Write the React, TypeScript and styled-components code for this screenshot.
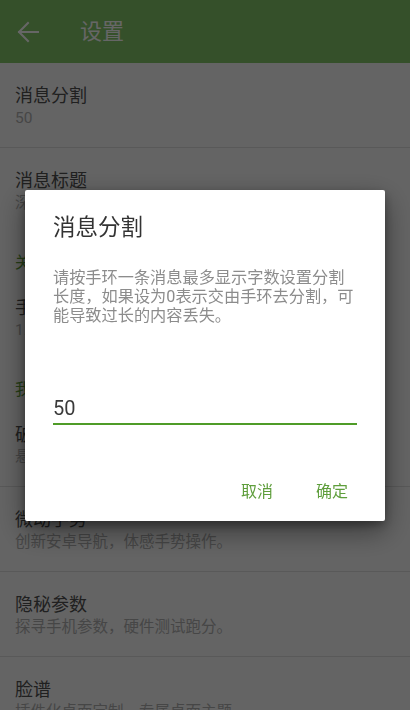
import React from "react";
import styled, { createGlobalStyle } from "styled-components";

const FONT = `Roboto, "Noto Sans CJK SC", "Noto Sans", sans-serif`;

const COLORS = {
  primary: "#84c869",
  accent: "#5f9e3c",
  line: "#4f9c28",
  title: "#505050",
  summary: "#b0b0b0",
  divider: "#dedede",
};

interface Pref {
  kind: "item" | "category";
  title: string;
  summary?: string;
  divider?: boolean;
}

const prefs: Pref[] = [
  { kind: "item", title: "消息分割", summary: "50", divider: true },
  { kind: "item", title: "消息标题", summary: "深度定制通知标题格式" },
  { kind: "category", title: "关于手环" },
  { kind: "item", title: "手环版本", summary: "1.0.3.21" },
  { kind: "category", title: "我的工具" },
  { kind: "item", title: "破解主题", summary: "悬浮窗口，随时切换主题。", divider: true },
  { kind: "item", title: "微动手势", summary: "创新安卓导航，体感手势操作。", divider: true },
  { kind: "item", title: "隐秘参数", summary: "探寻手机参数，硬件测试跑分。", divider: true },
  { kind: "item", title: "脸谱", summary: "插件化桌面定制，专属桌面主题。" },
];

const GlobalStyle = createGlobalStyle`
  html, body, #root {
    margin: 0;
    padding: 0;
    height: 100%;
  }
  body {
    font-family: ${FONT};
    background: #fafafa;
    overflow: hidden;
  }
  * {
    box-sizing: border-box;
  }
`;

const App: React.FC = () => {
  return (
    <>
      <GlobalStyle />
      <Page>
        <Toolbar>
          <BackButton>
            <svg width="24" height="22" viewBox="0 0 24 22" fill="none">
              <path
                d="M22 11H3M12 2L3 11l9 9"
                stroke="#fff"
                strokeWidth="2"
                strokeLinecap="square"
              />
            </svg>
          </BackButton>
          <ToolbarTitle>设置</ToolbarTitle>
        </Toolbar>

        <PrefList>
          {prefs.map((p, i) =>
            p.kind === "category" ? (
              <Category key={i}>{p.title}</Category>
            ) : (
              <PrefItem key={i} $divider={!!p.divider}>
                <PrefTitle>{p.title}</PrefTitle>
                <PrefSummary>{p.summary}</PrefSummary>
              </PrefItem>
            )
          )}
        </PrefList>
      </Page>

      <Scrim>
        <Dialog>
          <DialogTitle>消息分割</DialogTitle>
          <DialogMessage>
            请按手环一条消息最多显示字数设置分割长度，如果设为0表示交由手环去分割，可能导致过长的内容丢失。
          </DialogMessage>
          <InputField defaultValue="50" />
          <Actions>
            <ActionButton>取消</ActionButton>
            <ActionButton>确定</ActionButton>
          </Actions>
        </Dialog>
      </Scrim>
    </>
  );
};

const Page = styled.div`
  height: 100%;
  display: flex;
  flex-direction: column;
  background: #fafafa;
`;

const Toolbar = styled.header`
  height: 63px;
  flex-shrink: 0;
  display: flex;
  align-items: center;
  background: ${COLORS.primary};
  color: #fff;
`;

const BackButton = styled.div`
  width: 80px;
  height: 63px;
  display: flex;
  align-items: center;
  padding-left: 16px;
  padding-top: 1px;
`;

const ToolbarTitle = styled.h1`
  margin: 0;
  font-size: 22px;
  font-weight: 400;
  line-height: 28px;
`;

const PrefList = styled.div`
  display: flex;
  flex-direction: column;
`;

const PrefItem = styled.div<{ $divider: boolean }>`
  height: 85px;
  flex-shrink: 0;
  padding: 21px 15px 0;
  border-bottom: 1px solid ${(p) => (p.$divider ? COLORS.divider : "transparent")};
`;

const PrefTitle = styled.div`
  font-size: 18px;
  line-height: 24px;
  color: ${COLORS.title};
  white-space: nowrap;
`;

const PrefSummary = styled.div`
  font-size: 15.5px;
  line-height: 20px;
  color: ${COLORS.summary};
  white-space: nowrap;
`;

const Category = styled.div`
  height: 42px;
  flex-shrink: 0;
  padding: 20px 15px 0;
  font-size: 15.5px;
  line-height: 20px;
  color: ${COLORS.accent};
`;

const Scrim = styled.div`
  position: fixed;
  inset: 0;
  background: rgba(0, 0, 0, 0.6);
  display: flex;
  align-items: center;
  justify-content: center;
`;

const Dialog = styled.div`
  width: 360px;
  background: #fff;
  border-radius: 2px;
  box-shadow: 0 10px 28px rgba(0, 0, 0, 0.45), 0 4px 10px rgba(0, 0, 0, 0.3);
  padding: 23px 28px 13px;
  display: flex;
  flex-direction: column;
`;

const DialogTitle = styled.h2`
  margin: 0;
  font-size: 22.5px;
  font-weight: 400;
  line-height: 28px;
  color: #333;
`;

const DialogMessage = styled.p`
  margin: 27px 0 0;
  font-size: 16.2px;
  line-height: 19px;
  color: #8c8c8c;
`;

const InputField = styled.input`
  margin-top: 70px;
  width: 100%;
  height: 30px;
  padding: 0 0 2px;
  border: none;
  border-bottom: 2px solid ${COLORS.line};
  outline: none;
  background: transparent;
  font-family: ${FONT};
  font-size: 20px;
  line-height: 26px;
  color: #3a3a3a;
`;

const Actions = styled.div`
  margin: 47px -3px 0 0;
  display: flex;
  justify-content: flex-end;
  gap: 19px;
`;

const ActionButton = styled.button`
  height: 36px;
  padding: 0 12px;
  border: none;
  background: transparent;
  font-family: ${FONT};
  font-size: 16px;
  color: ${COLORS.accent};
  cursor: pointer;
`;

export default App;
